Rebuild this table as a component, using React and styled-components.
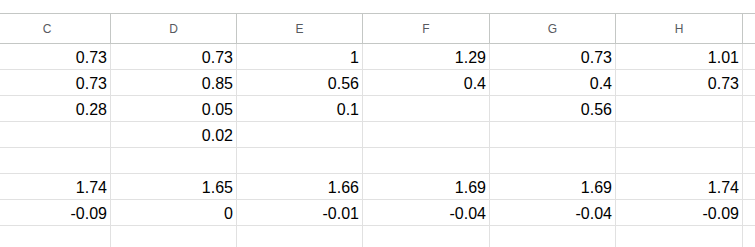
import React from 'react'
import styled, { createGlobalStyle } from 'styled-components'

const GlobalStyle = createGlobalStyle`
  body {
    margin: 0;
    background: #fff;
    font-family: "Liberation Sans", Arial, sans-serif;
  }
`;

// widths include the 1px right border
const widths = [127, 126, 126, 127, 126, 127, 30];
const headers = ['C', 'D', 'E', 'F', 'G', 'H', ''];

const rows = [
  ['0.73', '0.73', '1', '1.29', '0.73', '1.01', ''],
  ['0.73', '0.85', '0.56', '0.4', '0.4', '0.73', ''],
  ['0.28', '0.05', '0.1', '', '0.56', '', ''],
  ['', '0.02', '', '', '', '', ''],
  ['', '', '', '', '', '', ''],
  ['1.74', '1.65', '1.66', '1.69', '1.69', '1.74', ''],
  ['-0.09', '0', '-0.01', '-0.04', '-0.04', '-0.09', ''],
  ['', '', '', '', '', '', ''],
];

const Viewport = styled.div`
  width: 755px;
  height: 247px;
  overflow: hidden;
`;

const Sheet = styled.div`
  padding-top: 13px;
  margin-left: -16px;
  width: 771px;
`;

const HeaderRow = styled.div`
  display: flex;
  height: 29px;
  border-top: 1px solid #c4c7c5;
  border-bottom: 1px solid #c4c7c5;
`;

const HeaderCell = styled.div`
  flex: 0 0 auto;
  box-sizing: border-box;
  border-right: 1px solid #c4c7c5;
  display: flex;
  align-items: center;
  justify-content: center;
  font-size: 12px;
  color: #575a60;
  padding-top: 1px;
`;

const Row = styled.div`
  display: flex;
  height: 25px;
  border-bottom: 1px solid #e1e1e1;
`;

const Cell = styled.div`
  flex: 0 0 auto;
  box-sizing: border-box;
  border-right: 1px solid #e1e1e1;
  display: flex;
  align-items: center;
  justify-content: flex-end;
  padding: 2px 3px 0 0;
  font-size: 16px;
  color: #000;
`;

export default function App() {
  return (
    <>
      <GlobalStyle />
      <Viewport>
        <Sheet>
          <HeaderRow>
            {headers.map((h, i) => (
              <HeaderCell key={i} style={{ width: widths[i] }}>{h}</HeaderCell>
            ))}
          </HeaderRow>
          {rows.map((r, ri) => (
            <Row key={ri}>
              {r.map((v, ci) => (
                <Cell key={ci} style={{ width: widths[ci] }}>{v}</Cell>
              ))}
            </Row>
          ))}
        </Sheet>
      </Viewport>
    </>
  )
}
